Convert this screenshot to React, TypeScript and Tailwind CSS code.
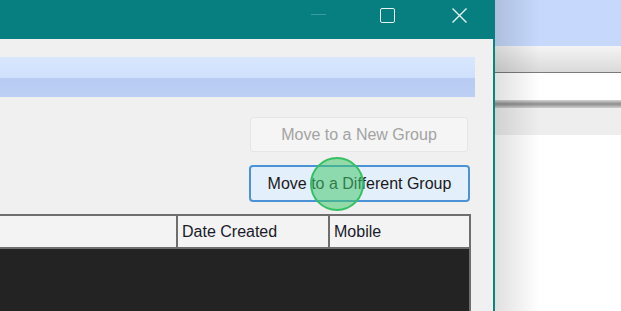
import React from "react";

const font = { fontFamily: '"Liberation Sans", Arial, sans-serif' };

const App: React.FC = () => {
    return (
        <div className="relative flex h-[311px] w-[621px] overflow-hidden bg-white" style={font}>
            {/* Dialog window */}
            <div className="flex w-[495px] shrink-0 flex-col">
                {/* Title bar */}
                <div className="flex h-[39px] shrink-0 items-start bg-[#077f80]">
                    <div className="ml-[311px] mt-[14px] h-px w-[15px] bg-[#3a9d9d]" />
                    <div className="ml-[54px] mt-[8px] h-[15px] w-[15px] rounded-[2px] border-[1.5px] border-[#e8f4f4]" />
                    <svg className="ml-[56px] mt-[7px]" width="17" height="17" viewBox="0 0 17 17">
                        <path d="M1.5 1.5 L15.5 15.5 M15.5 1.5 L1.5 15.5" stroke="#e8f4f4" strokeWidth="1.4" fill="none" />
                    </svg>
                </div>

                {/* Body */}
                <div className="flex flex-1 flex-col border-r-2 border-[#0b8383] bg-[#f0f0f0] pt-[18px]">
                    {/* Blue banner */}
                    <div className="flex h-[40px] w-[475px] flex-col">
                        <div className="h-[21px] bg-gradient-to-b from-[#d8e7fd] to-[#cfe0fc]" />
                        <div className="h-[19px] bg-gradient-to-b from-[#b8ccf3] to-[#bbcff4]" />
                    </div>

                    {/* Buttons */}
                    <div className="flex flex-col items-end pr-[23px]">
                        <button type="button" className="mt-[20px] mr-[2px] flex h-[35px] w-[218px] items-center justify-center rounded-[3px] border border-[#e6e6e6] bg-[#f5f5f5] text-[16px] text-[#a3a3a3]">
                            Move to a New Group
                        </button>
                        <button type="button" className="mt-[13px] flex h-[37px] w-[221px] items-center justify-center rounded-[4px] border-2 border-[#4b93d6] bg-[#e3effb] text-[16px] text-[#1a1a1a]">
                            Move to a Different Group
                        </button>
                    </div>

                    {/* Grid */}
                    <div className="mt-[12px] ml-[-2px] flex w-[473px] flex-1 flex-col border-2 border-b-0 border-[#6e6e6e]">
                        <div className="flex h-[33px] shrink-0 border-b-2 border-[#6e6e6e] bg-[#f3f3f3] text-[16px] text-[#1a1a2a]">
                            <div className="w-[178px] border-r-2 border-[#6e6e6e]" />
                            <div className="flex w-[152px] items-center border-r-2 border-[#6e6e6e] pl-[4px]">Date Created</div>
                            <div className="flex flex-1 items-center pl-[4px]">Mobile</div>
                        </div>
                        <div className="flex-1 bg-[#232323]" />
                    </div>
                </div>
            </div>

            {/* Background application */}
            <div className="relative flex flex-1 flex-col">
                <div className="h-[46px] bg-[#c6d9fc]" />
                <div className="h-[26px] bg-gradient-to-b from-[#f4f4f4] to-[#dadada]" />
                <div className="h-px bg-[#7a7a7a]" />
                <div className="h-[27px] bg-white" />
                <div className="h-[8px] bg-gradient-to-b from-[#d6d6d6] via-[#8e8e8e] to-[#d0d0d0]" />
                <div className="h-[27px] bg-[#eeeeee]" />
                <div className="flex-1 bg-white" />
                {/* Window shadow */}
                <div className="pointer-events-none absolute inset-y-0 left-0 w-[45px] bg-gradient-to-r from-[rgba(0,0,0,0.12)] to-transparent" />
            </div>

            {/* Click marker */}
            <div className="pointer-events-none absolute left-[310px] top-[157px] h-[54px] w-[54px] rounded-full border-2 border-[#35c062] bg-[rgba(70,200,110,0.55)]" />
        </div>
    );
};

export default App;
